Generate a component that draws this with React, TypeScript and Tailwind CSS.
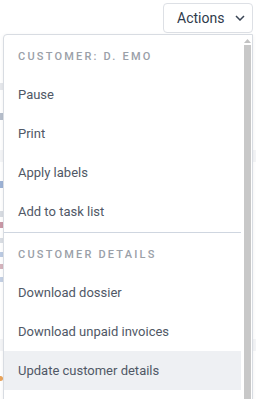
import React from "react";

const items1 = ["Pause", "Print", "Apply labels", "Add to task list"];
const items2 = ["Download dossier", "Download unpaid invoices", "Update customer details"];

function Row({ label, active }: { label: string; active?: boolean }) {
  return (
    <div
      className={`h-[39px] flex items-center pl-[14px] text-[13px] text-[#505866] ${
        active ? "bg-[#eef0f3]" : ""
      }`}
    >
      {label}
    </div>
  );
}

function Header({ label }: { label: string }) {
  return (
    <div className="h-[40px] pt-[14px] pl-[14px] text-[11px] leading-[16px] font-medium tracking-[0.2em] text-[#9aa0a8]">
      {label}
    </div>
  );
}

function Bit({ h, color, mt }: { h: string; color: string; mt: string }) {
  return <div className={`${h} ${mt} w-[3px] ${color}`} />;
}

export default function App() {
  return (
    <div
      className="relative w-[256px] h-[399px] overflow-hidden bg-white"
      style={{ fontFamily: "Roboto, 'Liberation Sans', sans-serif" }}
    >
      {/* Actions button */}
      <div className="flex justify-end pt-[3px] pr-[3px]">
        <button className="w-[90px] h-[30px] flex items-center pl-[13px] gap-[11px] rounded-[4px] border border-[#dde0e5] bg-white text-[14px] text-[#2f3a4b]">
          <span>Actions</span>
          <svg width="10" height="6" viewBox="0 0 10 6" fill="none">
            <path d="M1 1l4 4l4-4" stroke="#3a4555" strokeWidth="1.5" />
          </svg>
        </button>
      </div>

      {/* faint background page fragments, peeking out at the edges */}
      <div className="flex flex-col">
        <Bit mt="mt-[50px]" h="h-[7px]" color="bg-[#e6e8ec]" />
        <Bit mt="mt-[23px]" h="h-[7px]" color="bg-[#b7bfcc]" />
        <div className="mt-[30px] h-[12px] w-full bg-[#f4f5f7]" />
        <Bit mt="mt-[19px]" h="h-[7px]" color="bg-[#9db3d6]" />
        <Bit mt="mt-[23px]" h="h-[6px]" color="bg-[#d8dce2]" />
        <Bit mt="mt-[5px]" h="h-[6px]" color="bg-[#c998a6]" />
        <Bit mt="mt-[10px]" h="h-[5px]" color="bg-[#dadee4]" />
        <Bit mt="mt-[9px]" h="h-[5px]" color="bg-[#bccbe3]" />
        <Bit mt="mt-[7px]" h="h-[5px]" color="bg-[#d5b5be]" />
        <Bit mt="mt-[8px]" h="h-[5px]" color="bg-[#c4d0e4]" />
        <div className="mt-[57px] h-[12px] w-full bg-[#f4f5f7]" />
        <div className="mt-[25px] h-[5px] w-[3px] rounded-r-full bg-[#e9a45c]" />
      </div>

      {/* dropdown menu overlay */}
      <div className="absolute left-[3px] top-[34px] w-[250px] h-[380px] rounded-tl-[4px] border border-[#d8dce2] bg-white flex shadow-[0_1px_4px_rgba(0,0,0,0.06)]">
        <div className="w-[237px] flex flex-col">
          <Header label="CUSTOMER: D. EMO" />
          {items1.map((l) => (
            <Row key={l} label={l} />
          ))}
          <div className="mt-[1px] h-[1px] bg-[#cfd6e0]" />
          <Header label="CUSTOMER DETAILS" />
          {items2.map((l, i) => (
            <Row key={l} label={l} active={i === 2} />
          ))}
        </div>
        <div className="flex-1 flex flex-col items-center pt-[4px] pl-[2px]">
          <svg width="7" height="4" viewBox="0 0 7 4">
            <path d="M0 4L3.5 0L7 4Z" fill="#c2c2c2" />
          </svg>
          <div className="mt-[2px] w-[7px] flex-1 bg-[#c8c8c8]" />
        </div>
      </div>
    </div>
  );
}
